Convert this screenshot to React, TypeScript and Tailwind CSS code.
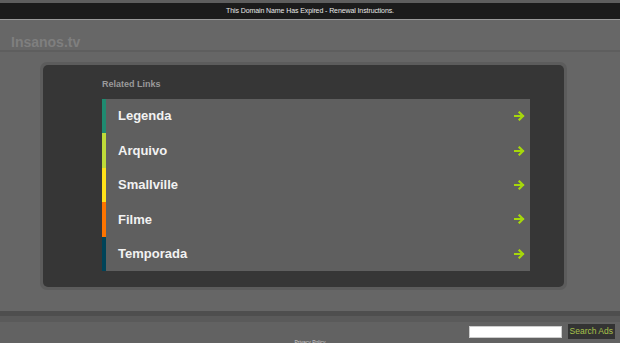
import React from 'react';

const links = [
  { label: 'Legenda', color: 'bg-[#1f8a70]' },
  { label: 'Arquivo', color: 'bg-[#bedb39]' },
  { label: 'Smallville', color: 'bg-[#ffe11a]' },
  { label: 'Filme', color: 'bg-[#fd7400]' },
  { label: 'Temporada', color: 'bg-[#004358]' },
];

const Arrow = () => (
  <svg width="11" height="10" viewBox="0 0 11 10" fill="none">
    <path d="M1 5h8M5.5 1.5 9 5 5.5 8.5" stroke="#a6d80a" strokeWidth="2.2" strokeLinecap="square" />
  </svg>
);

export default function App() {
  return (
    <div className="w-[620px] h-[343px] overflow-hidden bg-[#666666] font-['Liberation_Sans',Arial,sans-serif] flex flex-col">
      <div className="h-[3px] bg-[#5e5e5e]" />
      <div className="h-[16px] bg-[#1b1b1b] flex items-center justify-center">
        <span className="text-[7px] text-[#e8e8e8] tracking-[-0.1px]">This Domain Name Has Expired - Renewal Instructions.</span>
      </div>
      <div className="h-[1px] bg-[#9a9a9a]" />
      <div className="h-[32px] flex items-start pl-[11px] border-b-[2px] border-[#5e5e5e] bg-[#676767]">
        <span className="text-[14px] font-bold text-[#7f7f7f] leading-none mt-[15px]">Insanos.tv</span>
      </div>
      <div className="h-[259px] pt-[10px] pl-[40px]">
        <div className="w-[527px] h-[228px] rounded-[7px] bg-[#5c5c5c] p-[3px]">
          <div className="w-full h-full rounded-[5px] bg-[#363636] pl-[59px] pt-[13px]">
            <div className="text-[9px] font-bold text-[#9a9a9a] h-[21px]">Related Links</div>
            <div className="w-[428px] flex flex-col">
              {links.map((l) => (
                <div key={l.label} className="h-[34.4px] flex items-center bg-[#5f5f5f]">
                  <div className={`w-[4px] h-full ${l.color}`} />
                  <span className="ml-[12px] flex-1 text-[13px] font-bold text-[#f2f2f2]">{l.label}</span>
                  <span className="mr-[5px] flex items-center"><Arrow /></span>
                </div>
              ))}
            </div>
          </div>
        </div>
      </div>
      <div className="h-[5px] bg-[#4e4e4e]" />
      <div className="h-[6px] bg-[#5a5a5a]" />
      <div className="flex-1 bg-[#626262] relative">
        <div className="flex items-center justify-end pr-[5px] pt-[2px] gap-[6px]">
          <div className="w-[93px] h-[12px] bg-white border border-[#cccccc]" />
          <div className="h-[15px] px-[2px] bg-[#333333] flex items-center">
            <span className="text-[8.5px] text-[#a8c24a]">Search Ads</span>
          </div>
        </div>
        <div className="absolute left-0 right-0 bottom-[-3px] text-center text-[5px] text-[#cfcfcf]">Privacy Policy</div>
      </div>
    </div>
  );
}
